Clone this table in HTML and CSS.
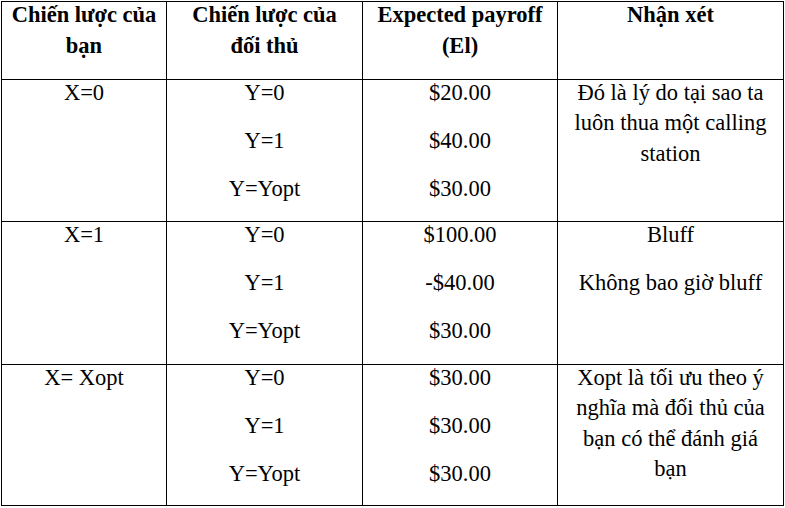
FILE: index.html
```html
<!DOCTYPE html>
<html lang="vi">
<head>
<meta charset="utf-8">
<link rel="stylesheet" href="styles.css">
</head>
<body>
<table class="grid">
  <colgroup>
    <col class="c1"><col class="c2"><col class="c3"><col class="c4">
  </colgroup>
  <tr class="head">
    <th><div class="cell">Chiến lược của bạn</div></th>
    <th><div class="cell">Chiến lược của<br>đối thủ</div></th>
    <th><div class="cell">Expected payroff (El)</div></th>
    <th><div class="cell">Nhận xét</div></th>
  </tr>
  <tr class="r1">
    <td><div class="cell"><p>X=0</p></div></td>
    <td><div class="cell"><p>Y=0</p><p>Y=1</p><p>Y=Yopt</p></div></td>
    <td><div class="cell"><p>$20.00</p><p>$40.00</p><p>$30.00</p></div></td>
    <td><div class="cell"><p>Đó là lý do tại sao ta luôn thua một calling station</p></div></td>
  </tr>
  <tr class="r2">
    <td><div class="cell"><p>X=1</p></div></td>
    <td><div class="cell"><p>Y=0</p><p>Y=1</p><p>Y=Yopt</p></div></td>
    <td><div class="cell"><p>$100.00</p><p>-$40.00</p><p>$30.00</p></div></td>
    <td><div class="cell"><p>Bluff</p><p>Không bao giờ bluff</p></div></td>
  </tr>
  <tr class="r3">
    <td><div class="cell"><p>X= Xopt</p></div></td>
    <td><div class="cell"><p>Y=0</p><p>Y=1</p><p>Y=Yopt</p></div></td>
    <td><div class="cell"><p>$30.00</p><p>$30.00</p><p>$30.00</p></div></td>
    <td><div class="cell"><p>Xopt là tối ưu theo ý nghĩa mà đối thủ của bạn có thể đánh giá bạn</p></div></td>
  </tr>
</table>
</body>
</html>
```
FILE: styles.css
```css
html, body {
  margin: 0;
  padding: 0;
  background: #ffffff;
}
body {
  padding: 1px 0 0 1px;
  font-family: "Liberation Serif", "Times New Roman", serif;
  font-size: 22.5px;
  color: #000;
}
.grid {
  border-collapse: collapse;
  table-layout: fixed;
  width: 782px;
}
.c1 { width: 165px; }
.c2 { width: 196px; }
.c3 { width: 195px; }
.c4 { width: 226px; }
.grid th, .grid td {
  border: 1px solid #000;
  vertical-align: top;
  text-align: center;
  padding: 0 6px;
  line-height: 30.5px;
}
.grid th {
  font-weight: bold;
}
.cell {
  margin-top: -2.5px;
}
.grid th .cell {
  margin-top: -3px;
  line-height: 31px;
}
.grid td p {
  margin: 0 0 17.5px 0;
}
.grid td p:last-child {
  margin-bottom: 0;
}
.head { height: 78px; }
.r1 { height: 142px; }
.r2 { height: 143px; }
.r3 { height: 141px; }
```
